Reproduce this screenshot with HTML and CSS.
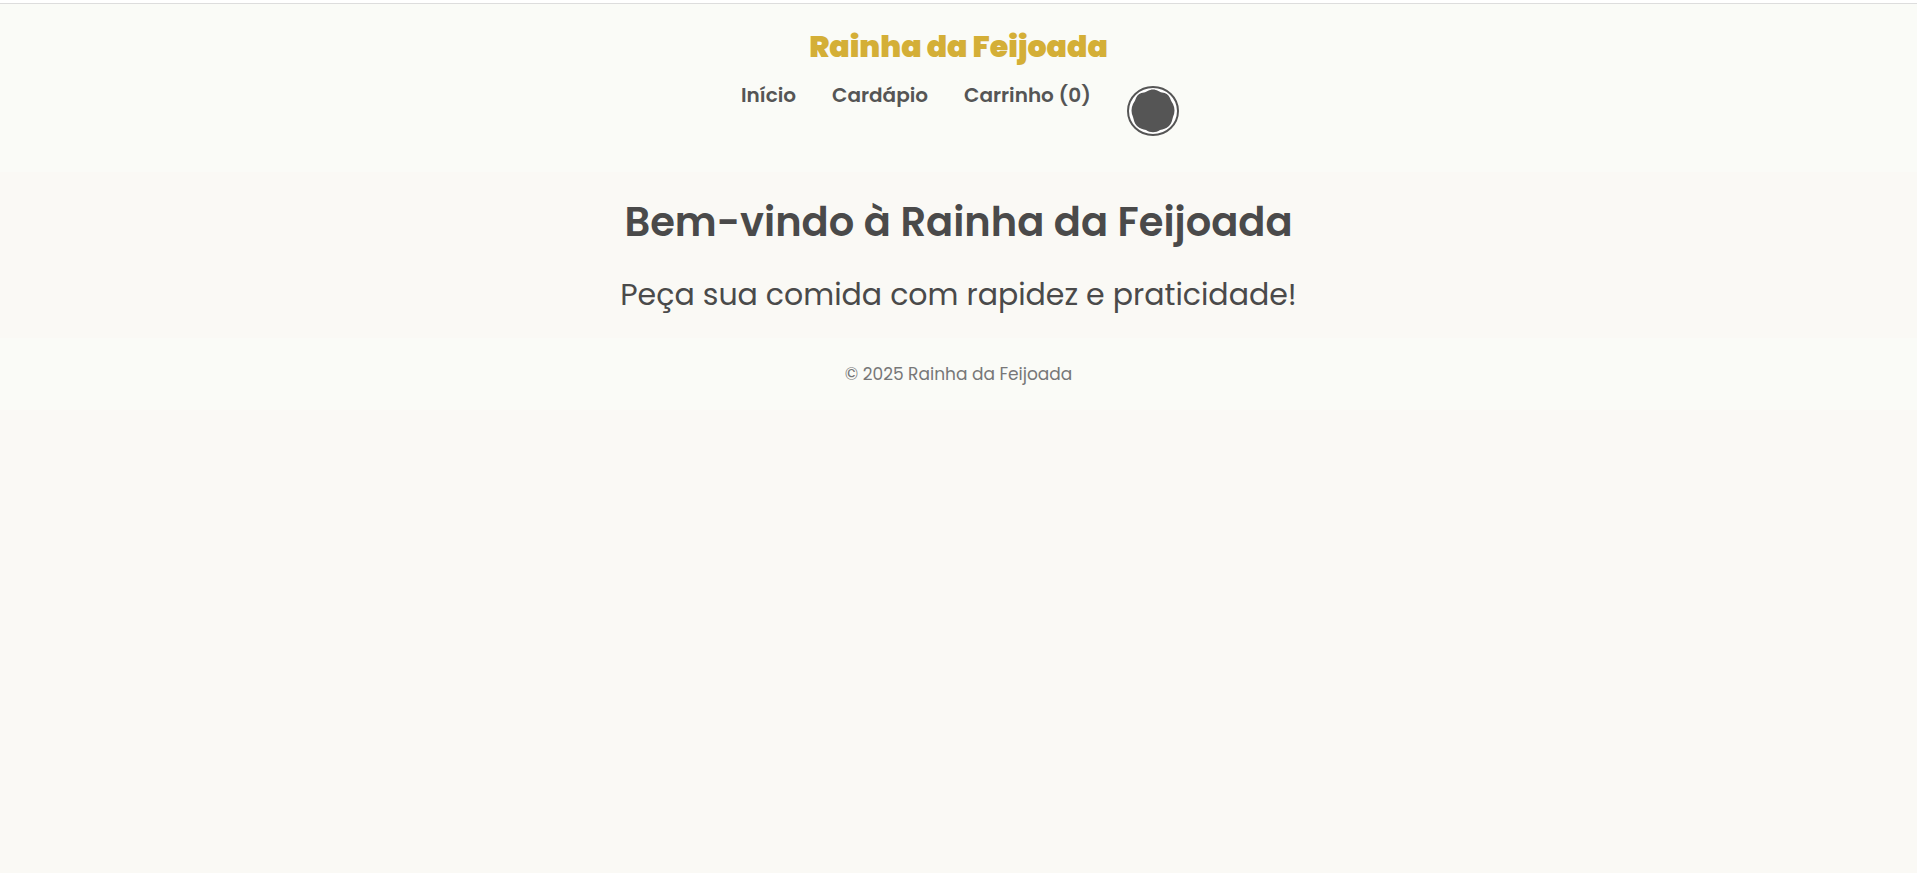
FILE: index.html
```html
<!DOCTYPE html>
<html lang="pt-BR">
<head>
<meta charset="utf-8">
<title>Rainha da Feijoada</title>
<link rel="stylesheet" href="styles.css">
</head>
<body>
<header class="site-header">
  <div class="brand">Rainha da Feijoada</div>
  <nav class="nav">
    <a class="nav-link" href="#inicio">Início</a>
    <a class="nav-link" href="#cardapio">Cardápio</a>
    <a class="nav-link" href="#carrinho">Carrinho (0)</a>
    <button class="theme-button" type="button" aria-label="Alternar tema">
      <svg class="theme-icon" viewBox="0 0 52 50" aria-hidden="true">
        <ellipse cx="26" cy="25" rx="25" ry="24" fill="#fff" stroke="#555" stroke-width="2"/>
        <path fill="#555" d="M26 3.500C30 3.500 32 6 35 6.500C39 7 41 8 43 12C44 15 45 16 46 18C48 22 48 27 46 31C45 34 45 37 42 40C39 43 36 43 33 44C29 47 23 47 19 44C16 43 13 43 10 40C7 37 7 34 6 31C4 27 4 22 6 18C7 16 8 15 9 12C11 8 13 7 17 6.500C20 6 22 3.500 26 3.500Z"/>
      </svg>
    </button>
  </nav>
</header>
<main class="hero">
  <h1 class="hero-title">Bem-vindo à Rainha da Feijoada</h1>
  <p class="hero-text">Peça sua comida com rapidez e praticidade!</p>
</main>
<footer class="site-footer">© 2025 Rainha da Feijoada</footer>
</body>
</html>
```
FILE: styles.css
```css
* { box-sizing: border-box; }
body {
  margin: 0;
  background: #faf9f5;
  color: #4a4a4a;
  font-family: Poppins, Inter, sans-serif;
  text-align: center;
}
.site-header {
  border-top: 1px solid #ddd;
  box-shadow: 0 -3px 0 #fff;
  margin-top: 3px;
  padding: 20px 20px 36px;
  background: #fafbf7;
}
.brand {
  color: #d4af37;
  font-size: 30px;
  font-weight: 900;
  line-height: 46px;
}
.nav {
  display: flex;
  justify-content: center;
  align-items: flex-start;
  gap: 36px;
  padding: 10px 0 0 3px;
}
.nav-link {
  color: #555;
  font-size: 20px;
  font-weight: 600;
  line-height: 30px;
  text-decoration: none;
}
.theme-button {
  padding: 0;
  margin-top: 6px;
  border: 0;
  background: none;
}
.theme-icon {
  display: block;
  width: 52px;
  height: 50px;
}
.hero { padding: 20px; }
.hero-title {
  margin: 0;
  font-size: 40px;
  font-weight: 600;
  line-height: 60px;
}
.hero-text {
  margin: 20px 0 0;
  font-size: 30px;
  line-height: 46px;
}
.site-footer {
  padding: 20px;
  background: #fafbf7;
  color: #777;
  font-size: 17px;
  line-height: 32px;
}
```
